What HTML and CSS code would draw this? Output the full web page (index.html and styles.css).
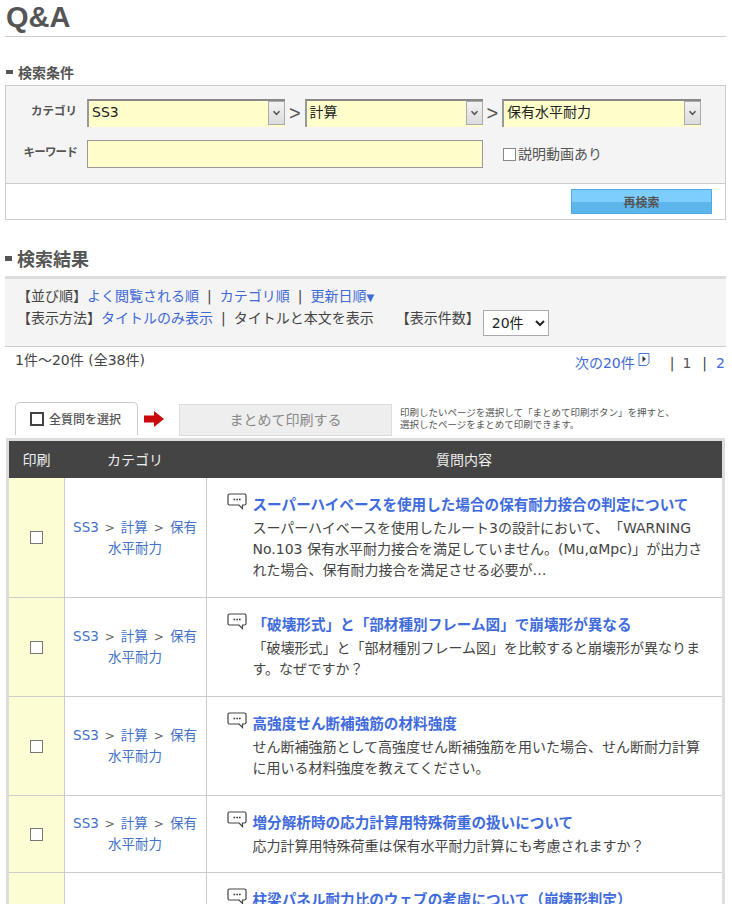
FILE: index.html
```html
<!DOCTYPE html>
<html lang="ja">
<head>
<meta charset="utf-8">
<title>Q&amp;A</title>
<link rel="stylesheet" href="styles.css">
</head>
<body>
<main class="page">
  <h1 class="page-title">Q&amp;A</h1>

  <h2 class="sec sec-small"><span class="sec-mark"></span>検索条件</h2>
  <form class="search">
    <div class="search-fields">
      <div class="field-row">
        <span class="label">カテゴリ</span>
        <div class="pick pick-a"><select class="pick-sel"><option>SS3</option></select><span class="pick-btn"><svg width="9" height="6" viewBox="0 0 9 6"><path d="M1.5 1.2 4.5 4.3 7.5 1.2" fill="none" stroke="#555" stroke-width="1.5"/></svg></span></div>
        <span class="gt">&gt;</span>
        <div class="pick pick-b"><select class="pick-sel"><option>計算</option></select><span class="pick-btn"><svg width="9" height="6" viewBox="0 0 9 6"><path d="M1.5 1.2 4.5 4.3 7.5 1.2" fill="none" stroke="#555" stroke-width="1.5"/></svg></span></div>
        <span class="gt">&gt;</span>
        <div class="pick pick-c"><select class="pick-sel"><option>保有水平耐力</option></select><span class="pick-btn"><svg width="9" height="6" viewBox="0 0 9 6"><path d="M1.5 1.2 4.5 4.3 7.5 1.2" fill="none" stroke="#555" stroke-width="1.5"/></svg></span></div>
      </div>
      <div class="field-row field-row-2">
        <span class="label label-tight">キーワード</span>
        <input class="keyword" type="text">
        <label class="video"><input class="video-box" type="checkbox">説明動画あり</label>
      </div>
    </div>
    <div class="search-foot"><button class="research" type="button">再検索</button></div>
  </form>

  <h2 class="sec sec-large"><span class="sec-mark"></span>検索結果</h2>
  <div class="sort">
    <div class="sort-line">【並び順】<a class="lnk">よく閲覧される順</a><span class="sep">|</span><a class="lnk">カテゴリ順</a><span class="sep">|</span><a class="lnk">更新日順<span class="tri">▼</span></a></div>
    <div class="sort-line sort-line-2">【表示方法】<a class="lnk">タイトルのみ表示</a><span class="sep">|</span>タイトルと本文を表示<span class="count-label">【表示件数】</span><select class="per-page"><option>20件</option></select></div>
  </div>

  <div class="paging">
    <span class="total">1件～20件 (全38件)</span>
    <span class="pager"><a class="lnk">次の20件</a><svg class="next-icon" width="12" height="13" viewBox="0 0 12 13"><path d="M1 .5h10v9.5l-2.500 2.500H1z" fill="#fff" stroke="#4a78d8"/><path d="M4.500 3l3.500 3-3.500 3z" fill="#333"/></svg><span class="pg-sep pg-first">|</span><span class="pg-cur">1</span><span class="pg-sep pg-second">|</span><a class="lnk">2</a></span>
  </div>

  <div class="tools">
    <div class="all-tab"><span class="all-box"></span>全質問を選択</div>
    <svg class="arrow" width="20" height="16" viewBox="0 0 20 16"><path d="M0 4.500h10V0l10 8-10 8v-4.500H0z" fill="#c80a0a"/></svg>
    <button class="print-btn" type="button">まとめて印刷する</button>
    <p class="note">印刷したいページを選択して「まとめて印刷ボタン」を押すと、<br>選択したページをまとめて印刷できます。</p>
  </div>

  <div class="table-wrap">
    <table class="qa">
      <thead>
        <tr><th class="c-print">印刷</th><th class="c-cat">カテゴリ</th><th>質問内容</th></tr>
      </thead>
      <tbody>
        <tr>
          <td class="c-print"><input class="row-box" type="checkbox"></td>
          <td class="c-cat"><a class="cat">SS3</a><span class="arr">&gt;</span><a class="cat">計算</a><span class="arr">&gt;</span><a class="cat">保有</a><br><a class="cat">水平耐力</a></td>
          <td class="c-q">
            <div class="q-head"><svg class="q-icon" width="20" height="17" viewBox="0 0 20 17"><path d="M2.500 1h15A1.500 1.500 0 0 1 19 2.500v8a1.500 1.500 0 0 1-1.500 1.500H15.500v3.500L12 12H2.500A1.500 1.500 0 0 1 1 10.500v-8A1.500 1.500 0 0 1 2.500 1z" fill="#fff" stroke="#444" stroke-width="1.200"/><path d="M6.500 6.500h1.600M9.300 6.500h1.600M12 6.500h1.600" stroke="#333" stroke-width="1.600"/></svg><a class="q-title">スーパーハイベースを使用した場合の保有耐力接合の判定について</a></div>
            <p class="q-body">スーパーハイベースを使用したルート3の設計において、「WARNING<br>No.103 保有水平耐力接合を満足していません。(Mu,αMpc)」が出力さ<br>れた場合、保有耐力接合を満足させる必要が…</p>
          </td>
        </tr>
        <tr>
          <td class="c-print"><input class="row-box" type="checkbox"></td>
          <td class="c-cat"><a class="cat">SS3</a><span class="arr">&gt;</span><a class="cat">計算</a><span class="arr">&gt;</span><a class="cat">保有</a><br><a class="cat">水平耐力</a></td>
          <td class="c-q">
            <div class="q-head"><svg class="q-icon" width="20" height="17" viewBox="0 0 20 17"><path d="M2.500 1h15A1.500 1.500 0 0 1 19 2.500v8a1.500 1.500 0 0 1-1.500 1.500H15.500v3.500L12 12H2.500A1.500 1.500 0 0 1 1 10.500v-8A1.500 1.500 0 0 1 2.500 1z" fill="#fff" stroke="#444" stroke-width="1.200"/><path d="M6.500 6.500h1.600M9.300 6.500h1.600M12 6.500h1.600" stroke="#333" stroke-width="1.600"/></svg><a class="q-title">「破壊形式」と「部材種別フレーム図」で崩壊形が異なる</a></div>
            <p class="q-body">「破壊形式」と「部材種別フレーム図」を比較すると崩壊形が異なりま<br>す。なぜですか？</p>
          </td>
        </tr>
        <tr>
          <td class="c-print"><input class="row-box" type="checkbox"></td>
          <td class="c-cat"><a class="cat">SS3</a><span class="arr">&gt;</span><a class="cat">計算</a><span class="arr">&gt;</span><a class="cat">保有</a><br><a class="cat">水平耐力</a></td>
          <td class="c-q">
            <div class="q-head"><svg class="q-icon" width="20" height="17" viewBox="0 0 20 17"><path d="M2.500 1h15A1.500 1.500 0 0 1 19 2.500v8a1.500 1.500 0 0 1-1.500 1.500H15.500v3.500L12 12H2.500A1.500 1.500 0 0 1 1 10.500v-8A1.500 1.500 0 0 1 2.500 1z" fill="#fff" stroke="#444" stroke-width="1.200"/><path d="M6.500 6.500h1.600M9.300 6.500h1.600M12 6.500h1.600" stroke="#333" stroke-width="1.600"/></svg><a class="q-title">高強度せん断補強筋の材料強度</a></div>
            <p class="q-body">せん断補強筋として高強度せん断補強筋を用いた場合、せん断耐力計算<br>に用いる材料強度を教えてください。</p>
          </td>
        </tr>
        <tr>
          <td class="c-print"><input class="row-box" type="checkbox"></td>
          <td class="c-cat"><a class="cat">SS3</a><span class="arr">&gt;</span><a class="cat">計算</a><span class="arr">&gt;</span><a class="cat">保有</a><br><a class="cat">水平耐力</a></td>
          <td class="c-q c-q-short">
            <div class="q-head"><svg class="q-icon" width="20" height="17" viewBox="0 0 20 17"><path d="M2.500 1h15A1.500 1.500 0 0 1 19 2.500v8a1.500 1.500 0 0 1-1.500 1.500H15.500v3.500L12 12H2.500A1.500 1.500 0 0 1 1 10.500v-8A1.500 1.500 0 0 1 2.500 1z" fill="#fff" stroke="#444" stroke-width="1.200"/><path d="M6.500 6.500h1.600M9.300 6.500h1.600M12 6.500h1.600" stroke="#333" stroke-width="1.600"/></svg><a class="q-title">増分解析時の応力計算用特殊荷重の扱いについて</a></div>
            <p class="q-body">応力計算用特殊荷重は保有水平耐力計算にも考慮されますか？</p>
          </td>
        </tr>
        <tr class="row-tall">
          <td class="c-print"></td>
          <td class="c-cat"></td>
          <td class="c-q">
            <div class="q-head"><svg class="q-icon" width="20" height="17" viewBox="0 0 20 17"><path d="M2.500 1h15A1.500 1.500 0 0 1 19 2.500v8a1.500 1.500 0 0 1-1.500 1.500H15.500v3.500L12 12H2.500A1.500 1.500 0 0 1 1 10.500v-8A1.500 1.500 0 0 1 2.500 1z" fill="#fff" stroke="#444" stroke-width="1.200"/><path d="M6.500 6.500h1.600M9.300 6.500h1.600M12 6.500h1.600" stroke="#333" stroke-width="1.600"/></svg><a class="q-title">柱梁パネル耐力比のウェブの考慮について（崩壊形判定）</a></div>
          </td>
        </tr>
      </tbody>
    </table>
  </div>
</main>
</body>
</html>
```

FILE: styles.css
```css
* { box-sizing: border-box; }
html, body { margin: 0; padding: 0; }
body {
  height: 904px;
  overflow: hidden;
  background: #fff;
  color: #444;
  font-family: "DejaVu Sans", "Noto Sans CJK JP", sans-serif;
  font-size: 14px;
  line-height: 21px;
  text-spacing-trim: space-all;
}
.page { width: 732px; padding: 0 6px 0 5px; }
.page-title {
  margin: 0;
  height: 37px;
  padding-left: 1px;
  border-bottom: 1px solid #ccc;
  font-family: "Liberation Sans", sans-serif;
  font-size: 29px;
  line-height: 35px;
  font-weight: 700;
  color: #555;
}
.sec { margin: 0; display: flex; align-items: center; font-weight: 700; color: #555; font-family: "Noto Sans CJK JP", sans-serif; }
.sec-small { margin-top: 25px; height: 23px; padding: 0 0 3px 1px; font-size: 14px; line-height: 20px; }
.sec-small .sec-mark { width: 7px; height: 4px; margin-right: 5px; background: #555; }
.sec-large { margin-top: 26px; height: 26px; padding-bottom: 1px; font-size: 18px; line-height: 25px; }
.sec-large .sec-mark { width: 7px; height: 5px; margin-right: 5px; background: #555; }

.search { border: 1px solid #ccc; height: 135px; }
.search-fields { height: 98px; background: #f4f4f4; border-bottom: 1px solid #ccc; padding-top: 13px; }
.field-row { display: flex; align-items: center; height: 28px; }
.field-row-2 { margin-top: 13px; }
.label {
  width: 71px;
  padding-bottom: 5px;
  text-align: right;
  font-family: "Noto Sans CJK JP", sans-serif;
  font-size: 11.500px;
  font-weight: 700;
  color: #555;
  margin-right: 10px;
  white-space: nowrap;
}
.label-tight { letter-spacing: -.8px; }
.pick { position: relative; height: 28px; background: #ffc; border-top: 2px solid #888; border-left: 2px solid #999; }
.pick-a { width: 198px; }
.pick-b { width: 178px; }
.pick-c { width: 199px; }
.pick-sel {
  width: 100%;
  height: 100%;
  padding: 0 20px 4px 3px;
  border: 0;
  background: transparent;
  appearance: none;
  font: 14px "DejaVu Sans", "Noto Sans CJK JP", sans-serif;
  color: #222;
}
.pick-btn {
  position: absolute;
  top: 0;
  right: 0;
  width: 17px;
  height: 24px;
  display: flex;
  align-items: center;
  justify-content: center;
  background: linear-gradient(#f2f2f2, #dcdcdc);
  border: 1px solid #aaa;
}
.gt { width: 19.500px; text-align: center; font: 20px/28px "Liberation Sans", sans-serif; color: #555; }
.keyword { width: 396px; height: 28px; background: #ffc; border: 1px solid #999; padding: 0 4px; }
.video { display: flex; align-items: center; margin-left: 20px; color: #555; }
.video-box { appearance: none; width: 13px; height: 13px; margin: 0 2px 0 0; background: #fff; border: 1px solid #888; }
.search-foot { display: flex; justify-content: flex-end; padding: 5px 13px 0 0; }
.research {
  width: 141px;
  height: 25px;
  padding: 0;
  border: 1px solid #52a9e0;
  background: linear-gradient(#7dcefc 0 50%, #5cb6ec 50% 100%);
  font: 700 12px "Noto Sans CJK JP", sans-serif;
  color: #555;
}

.sort { height: 71px; margin-top: 4px; padding: 7px 0 0 12px; background: #f4f4f4; border-top: 3px solid #ddd; border-bottom: 1px solid #ccc; }
.sort-line { height: 21px; white-space: nowrap; }
.sort-line-2 { display: flex; align-items: flex-start; margin-top: 1px; }
.lnk { color: #4169d6; }
.tri { font-size: 10px; }
.sep { margin: 0 8px; }
.count-label { margin-left: 22px; }
.per-page { height: 26px; width: 66px; margin: 2px 0 0 3px; padding: 0 0 0 4px; background: #fff; border: 1px solid #aaa; font: 14px "DejaVu Sans", "Noto Sans CJK JP", sans-serif; color: #222; }

.paging { display: flex; justify-content: space-between; height: 55px; padding: 3px 1px 0 10px; }
.pager { display: flex; align-items: flex-start; padding-top: 3px; }
.next-icon { margin: 0 0 0 3px; }
.pg-sep { margin: 0 8px; }
.pg-first { margin-left: 20px; }
.pg-second { margin: 0 9px 0 11px; }
.pg-cur { color: #555; }

.tools { display: flex; align-items: flex-start; height: 37px; padding-left: 10px; }
.all-tab {
  display: flex;
  align-items: center;
  width: 123px;
  height: 33px;
  padding-left: 14px;
  background: #fff;
  border: 1px solid #ccc;
  border-bottom: 0;
  border-radius: 5px 5px 0 0;
  font: 500 12px/1 "Noto Sans CJK JP", sans-serif;
  color: #555;
}
.all-box { width: 14px; height: 14px; margin-right: 5px; border: 2px solid #444; background: #fff; }
.arrow { margin: 9px 15px 0 6px; }
.print-btn {
  width: 213px;
  height: 32px;
  margin-top: 2px;
  padding: 0 0 3px;
  background: #eee;
  border: 1px solid #ddd;
  font: 14px "Noto Sans CJK JP", sans-serif;
  color: #888;
}
.note { margin: 4px 0 0 8px; font: 9.500px/12px "Noto Sans CJK JP", sans-serif; color: #555; white-space: nowrap; }

.table-wrap { width: 719px; margin: -1px 0 0 1px; border: 3px solid #ddd; border-bottom: 0; }
.qa { width: 100%; border-collapse: collapse; table-layout: fixed; }
.qa th { height: 37px; padding: 0; background: #444; color: #eee; font-weight: 400; font-family: "Noto Sans CJK JP", sans-serif; }
.qa td { padding: 0; border-bottom: 1px solid #ccc; }
.qa .c-print { width: 55px; }
.qa .c-cat { width: 142px; }
td.c-print { text-align: center; background: #fdfdd3; border-right: 1px solid #ccc; }
td.c-cat { text-align: center; padding: 0 4px; border-right: 1px solid #ccc; white-space: nowrap; line-height: 21px; font-size: 13.500px; }
.qa td.c-q { padding: 14px 10px 16px 20px; vertical-align: top; }
.qa td.c-q-short { padding-bottom: 15px; }
.row-tall td { height: 120px; }
.cat { color: #4472c8; }
.arr { margin: 0 6px; color: #666; font-size: 12px; line-height: 1; }
.row-box { appearance: none; display: block; width: 13px; height: 13px; margin: 0 auto; background: #fff; border: 1px solid #777; }
.q-head { display: flex; align-items: flex-start; height: 26px; white-space: nowrap; }
.q-icon { flex: none; margin: 1px 6px 0 0; }
.q-title { color: #3f6bdc; font-weight: 700; font-size: 14.600px; line-height: 24px; font-family: "Noto Sans CJK JP", sans-serif; }
.q-body { margin: 0 0 0 26px; white-space: nowrap; }
```
